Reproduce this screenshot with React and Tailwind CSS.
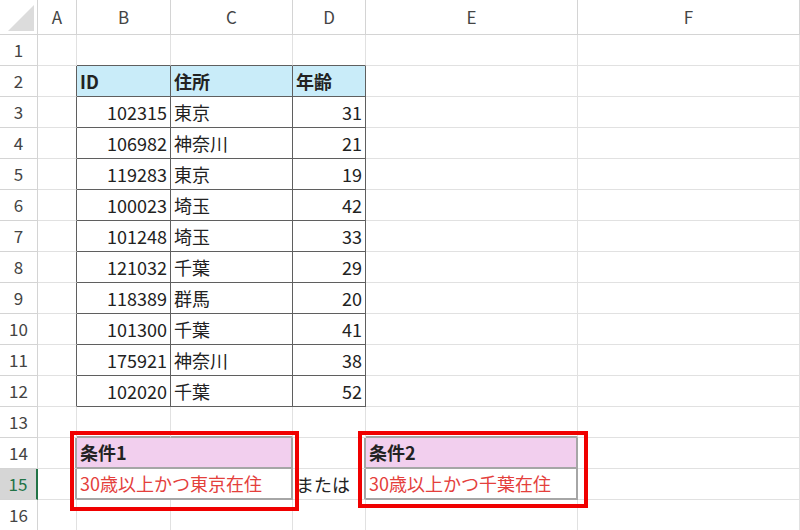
import React from "react";

const data = {
  2: ["ID", "住所", "年齢"],
  3: ["102315", "東京", "31"],
  4: ["106982", "神奈川", "21"],
  5: ["119283", "東京", "19"],
  6: ["100023", "埼玉", "42"],
  7: ["101248", "埼玉", "33"],
  8: ["121032", "千葉", "29"],
  9: ["118389", "群馬", "20"],
  10: ["101300", "千葉", "41"],
  11: ["175921", "神奈川", "38"],
  12: ["102020", "千葉", "52"],
};

const RB = { g: "border-r border-r-[#e1e1e1]", d: "border-r border-r-[#5f5f5f]", c: "border-r-2 border-r-[#a6a6a6]" };
const BB = { g: "border-b border-b-[#e1e1e1]", d: "border-b border-b-[#5f5f5f]", c: "border-b-2 border-b-[#a6a6a6]" };

function borders(r, c) {
  let rb = "g", bb = "g";
  const inTable = r >= 2 && r <= 12 && c >= 2 && c <= 4;
  if (inTable) { rb = "d"; bb = "d"; }
  if (c === 1 && r >= 2 && r <= 12) rb = "d";
  if (r === 1 && c >= 2 && c <= 4) bb = "d";
  const inCond = r >= 14 && r <= 15 && (c === 2 || c === 3 || c === 5);
  if (inCond) { rb = "c"; bb = "c"; }
  if (r === 13 && (c === 2 || c === 3 || c === 5)) bb = "c";
  if ((r === 14 || r === 15) && (c === 1 || c === 4)) rb = "c";
  return RB[rb] + " " + BB[bb];
}

export default function App() {
  const cells = [];
  const font = { fontFamily: '"Noto Sans CJK JP", "Noto Sans", sans-serif' };
  cells.push(
    <div key="corner" className="h-[35px] bg-white border-r border-b border-[#d4d4d4] relative overflow-hidden">
      <div className="absolute right-[3px] bottom-[3px] w-0 h-0 border-l-[26px] border-l-transparent border-b-[26px] border-b-[#dcdcdc]" />
    </div>
  );
  ["A", "B", "C", "D", "E", "F"].forEach((l) =>
    cells.push(
      <div key={"h" + l} className="h-[35px] bg-white border-r border-b border-[#d4d4d4] flex items-center justify-center text-[17px] text-[#444]">{l}</div>
    )
  );
  for (let r = 1; r <= 16; r++) {
    const sel = r === 15;
    cells.push(
      <div key={"r" + r} className={sel ? "h-[31px] bg-[#d6d6d6] border-r-2 border-r-[#217346] border-b border-b-[#d4d4d4] flex items-center justify-center text-[17px] text-[#217346]" : "h-[31px] bg-white border-r border-r-[#d4d4d4] border-b border-b-[#d4d4d4] flex items-center justify-center text-[17px] text-[#444]"}>{r}</div>
    );
    for (let c = 1; c <= 6; c++) {
      const b = borders(r, c);
      let content = null, cls = "", span = "";
      if (data[r] && c >= 2 && c <= 4) {
        const v = data[r][c - 2];
        if (r === 2) cls = "bg-[#c9ecf9] font-bold pl-[3px]";
        else if (c === 3) cls = "pl-[3px]";
        else cls = "justify-end pr-[3px]";
        content = v;
      }
      if ((r === 14 || r === 15) && c === 3) continue;
      if ((r === 14 || r === 15) && (c === 2 || c === 5)) {
        if (c === 2) span = "col-span-2";
        cls = r === 14 ? "bg-[#f2cfee] font-bold pl-[3px]" : "text-[#e4403c] pl-[3px]";
        content = r === 14 ? (c === 2 ? "条件1" : "条件2") : c === 2 ? "30歳以上かつ東京在住" : "30歳以上かつ千葉在住";
      }
      if (r === 15 && c === 4) { cls = "pl-[3px]"; content = "または"; }
      cells.push(
        <div key={r + "-" + c} className={`h-[31px] flex items-center text-[18px] text-[#222] whitespace-nowrap ${span} ${b} ${cls}`}>{content}</div>
      );
    }
  }
  return (
    <div className="w-[800px] h-[530px] overflow-hidden bg-white relative" style={font}>
      <div className="grid grid-cols-[38px_39px_94px_122px_73px_212px_222px]">{cells}</div>
      <div className="absolute left-[70px] top-[431px] w-[229px] h-[80px] border-4 border-[#f00000]" />
      <div className="absolute left-[358px] top-[431px] w-[230px] h-[77px] border-4 border-[#f00000]" />
    </div>
  );
}
